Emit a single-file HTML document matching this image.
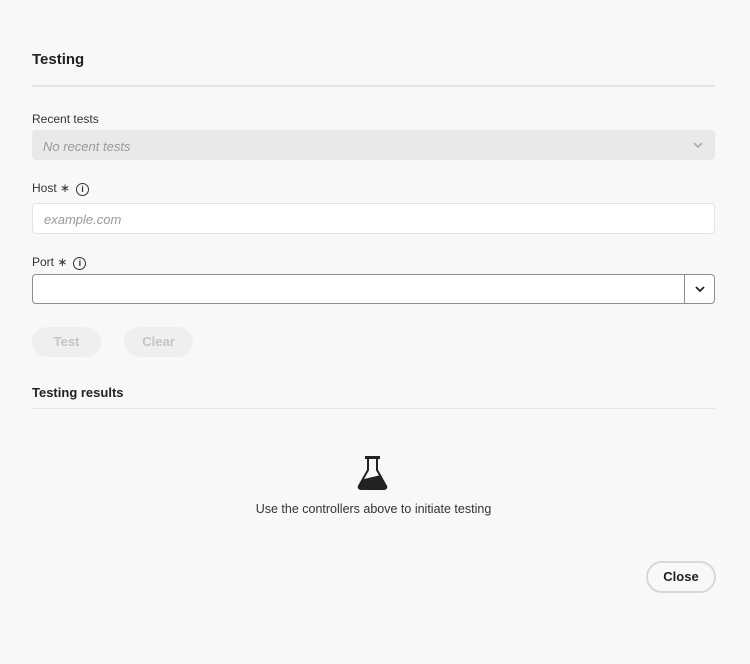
<!DOCTYPE html>
<html><head><style>
body{margin:0;width:750px;height:664px;background:#f8f8f8;font-family:"Liberation Sans",sans-serif;color:#222;position:relative;overflow:hidden}
.a{position:absolute}
.lbl{font-size:12px;color:#333}
.info{display:inline-block;width:11px;height:11px;border:1.3px solid #333;border-radius:50%;font-size:9px;line-height:11px;text-align:center;font-weight:bold;vertical-align:0px;margin-left:6px}
.btn{border-radius:16px;font-size:13px;text-align:center;line-height:30px;font-weight:bold}
</style></head><body>
<div class="a" style="left:32px;top:51px;font-size:15px;font-weight:bold">Testing</div>
<div class="a" style="left:32px;top:85px;width:683px;height:2px;background:#e4e4e4"></div>
<div class="a lbl" style="left:32px;top:112px">Recent tests</div>
<div class="a" style="left:32px;top:130px;width:683px;height:30px;background:#e9e9e9;border-radius:4px"></div>
<div class="a" style="left:43px;top:139px;font-size:13px;font-style:italic;color:#999">No recent tests</div>
<svg class="a" style="left:692px;top:140px" width="12" height="10"><path d="M2 3l4 4 4-4" stroke="#aaa" stroke-width="1.6" fill="none"/></svg>
<div class="a lbl" style="left:32px;top:181px">Host ∗<span class="info">i</span></div>
<div class="a" style="left:32px;top:203px;width:681px;height:29px;background:#fff;border:1px solid #e3e3e3;border-radius:4px"></div>
<div class="a" style="left:44px;top:212px;font-size:13px;font-style:italic;color:#999">example.com</div>
<div class="a lbl" style="left:32px;top:255px">Port ∗<span class="info">i</span></div>
<div class="a" style="left:32px;top:274px;width:681px;height:28px;background:#fff;border:1px solid #8e8e8e;border-radius:4px"></div>
<div class="a" style="left:684px;top:275px;width:1px;height:28px;background:#8e8e8e"></div>
<svg class="a" style="left:694px;top:284px" width="12" height="10"><path d="M2 3l4 4 4-4" stroke="#222" stroke-width="1.8" fill="none"/></svg>
<div class="a btn" style="left:32px;top:327px;width:69px;height:30px;background:#efefef;color:#c4c4c4">Test</div>
<div class="a btn" style="left:124px;top:327px;width:69px;height:30px;background:#efefef;color:#c4c4c4">Clear</div>
<div class="a" style="left:32px;top:385px;font-size:13px;font-weight:bold">Testing results</div>
<div class="a" style="left:32px;top:408px;width:683px;height:1px;background:#e4e4e4"></div>
<svg class="a" style="left:357px;top:455px" width="32" height="37"><rect x="8" y="1" width="15" height="3" fill="#222"/><path d="M11 4v11L2 31a2 2 0 0 0 2 3h23a2 2 0 0 0 2-3L20 15V4" stroke="#222" stroke-width="2" fill="none"/><path d="M7 24L24 20l5 11a2 2 0 0 1-2 3H4a2 2 0 0 1-2-3z" fill="#222"/></svg>
<div class="a" style="left:0;width:747px;top:502px;text-align:center;font-size:12.5px;color:#333">Use the controllers above to initiate testing</div>
<div class="a btn" style="left:646px;top:561px;width:66px;height:28px;line-height:28px;border:2px solid #d8d8d8;color:#222">Close</div>
</body></html>
